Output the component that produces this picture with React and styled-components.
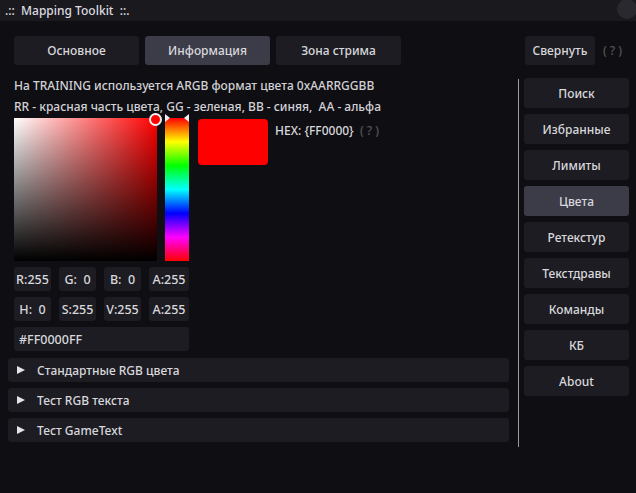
import React from "react";
import styled, { createGlobalStyle } from "styled-components";

const Global = createGlobalStyle`
  html, body { margin: 0; padding: 0; background: #0f0e13; }
  body { font-family: "Noto Sans", "Open Sans", sans-serif; font-size: 12px; font-weight: 500; color: #d4d4d8; }
  * { box-sizing: border-box; }
`;

const Window = styled.div`
  width: 636px;
  height: 493px;
  background: #0f0e13;
  overflow: hidden;
  display: flex;
  flex-direction: column;
`;

const TitleBar = styled.div`
  position: relative;
  height: 21px;
  background: #1a191e;
  display: flex;
  align-items: center;
  padding-left: 5px;
  color: #dcdce0;
  white-space: pre;
  flex-shrink: 0;
`;

const CloseDot = styled.div`
  position: absolute;
  right: -1px;
  top: -1px;
  width: 20px;
  height: 20px;
  border-radius: 50%;
  background: #2a2930;
`;

const Content = styled.div`
  display: grid;
  grid-template-columns: 501px 1fr;
  column-gap: 9px;
  padding-left: 8px;
  padding-top: 15px;
`;

const LeftCol = styled.div`
  display: flex;
  flex-direction: column;
`;

const TabsRow = styled.div`
  display: flex;
  gap: 6px;
  padding-left: 6px;
`;

const Btn = styled.div`
  display: flex;
  align-items: center;
  justify-content: center;
  width: ${(p) => p.$w || 125}px;
  height: ${(p) => p.$h || 29}px;
  border-radius: 3px;
  background: ${(p) => (p.$active ? "#3c3b48" : "#1d1c22")};
  color: #d8d8dc;
  white-space: nowrap;
`;

const InfoText = styled.div`
  padding-left: 6px;
  margin-top: 10px;
  line-height: 21px;
  white-space: pre;
  color: #d2d2d6;
`;

const PickerRow = styled.div`
  display: flex;
  padding-left: 6px;
  margin-top: 1px;
`;

const PickerCol = styled.div`
  display: flex;
  flex-direction: column;
  width: 175px;
`;

const PickerTop = styled.div`
  display: flex;
  gap: 8px;
`;

const SVBox = styled.div`
  position: relative;
  width: 143px;
  height: 143px;
  background: linear-gradient(to bottom, rgba(0,0,0,0), #000),
    linear-gradient(to right, #fff, #f00);
`;

const SVMarker = styled.div`
  position: absolute;
  right: -5px;
  top: -5px;
  width: 13px;
  height: 13px;
  border-radius: 50%;
  background: #f00;
  border: 2px solid #f0f0f0;
`;

const HueBar = styled.div`
  position: relative;
  width: 24px;
  height: 143px;
  background: linear-gradient(to bottom, #f00 0%, #ff0 16.6%, #0f0 33.3%, #0ff 50%, #00f 66.6%, #f0f 83.3%, #f00 100%);
`;

const Arrow = styled.div`
  position: absolute;
  top: -4px;
  width: 0;
  height: 0;
  border-top: 4px solid transparent;
  border-bottom: 4px solid transparent;
  ${(p) =>
    p.$side === "left"
      ? "left: 0; border-left: 5px solid #f4f4f4;"
      : "right: 0; border-right: 5px solid #f4f4f4;"}
`;

const FieldGrid = styled.div`
  display: grid;
  grid-template-columns: 37px 37px 37px 40px;
  column-gap: 8px;
  row-gap: 6px;
  margin-top: 6px;
`;

const Field = styled.div`
  height: 24px;
  border-radius: 3px;
  background: #1d1c22;
  display: flex;
  align-items: center;
  justify-content: ${(p) => (p.$left ? "flex-start" : "center")};
  padding-left: ${(p) => (p.$left ? "5px" : "0")};
  white-space: pre;
  color: #d8d8dc;
  font-size: 12.5px;
  grid-column: ${(p) => (p.$span ? "1 / -1" : "auto")};
`;

const Swatch = styled.div`
  width: 70px;
  height: 46px;
  margin-left: 9px;
  margin-top: 1px;
  border-radius: 4px;
  background: #ff0000;
`;

const HexLabel = styled.div`
  margin-left: 7px;
  margin-top: 4px;
  white-space: pre;
  color: #d8d8dc;
`;

const Hint = styled.span`
  color: #55545c;
  font-size: 12px;
  white-space: pre;
`;

const Headers = styled.div`
  display: flex;
  flex-direction: column;
  gap: 6px;
  margin-top: 7px;
`;

const Header = styled.div`
  height: 24px;
  border-radius: 3px;
  background: #1d1c22;
  display: flex;
  align-items: center;
  padding-left: 9px;
  color: #d8d8dc;
`;

const Tri = styled.div`
  width: 0;
  height: 0;
  border-top: 4.5px solid transparent;
  border-bottom: 4.5px solid transparent;
  border-left: 8px solid #e4e4e8;
  margin-right: 12px;
`;

const RightCol = styled.div`
  display: flex;
  flex-direction: column;
`;

const TopRight = styled.div`
  display: flex;
  align-items: center;
  gap: 8px;
  padding-left: 7px;
`;

const Sidebar = styled.div`
  margin-top: 14px;
  border-left: 1px solid #9a9aa0;
  padding-left: 5px;
  height: 368px;
  display: flex;
  flex-direction: column;
  gap: 6px;
`;

const SideBtn = styled(Btn)`
  width: 105px;
  height: 30px;
  margin-top: ${(p) => (p.$first ? "-1px" : "0")};
`;

const sideItems = ["Поиск", "Избранные", "Лимиты", "Цвета", "Ретекстур", "Текстдравы", "Команды", "КБ", "About"];

export default function App() {
  return (
    <Window>
      <Global />
      <TitleBar>
        {".::  Mapping Toolkit  ::."}
        <CloseDot />
      </TitleBar>
      <Content>
        <LeftCol>
          <TabsRow>
            <Btn>Основное</Btn>
            <Btn $active>Информация</Btn>
            <Btn>Зона стрима</Btn>
          </TabsRow>
          <InfoText>
            {"На TRAINING используется ARGB формат цвета 0xAARRGGBB\nRR - красная часть цвета, GG - зеленая, BB - синяя,  AA - альфа"}
          </InfoText>
          <PickerRow>
            <PickerCol>
              <PickerTop>
                <SVBox>
                  <SVMarker />
                </SVBox>
                <HueBar>
                  <Arrow $side="left" />
                  <Arrow $side="right" />
                </HueBar>
              </PickerTop>
              <FieldGrid>
                <Field>{"R:255"}</Field>
                <Field>{"G:  0"}</Field>
                <Field>{"B:  0"}</Field>
                <Field>{"A:255"}</Field>
                <Field>{"H:  0"}</Field>
                <Field>{"S:255"}</Field>
                <Field>{"V:255"}</Field>
                <Field>{"A:255"}</Field>
                <Field $left $span>#FF0000FF</Field>
              </FieldGrid>
            </PickerCol>
            <Swatch />
            <HexLabel>
              {"HEX: {FF0000}  "}
              <Hint>( ? )</Hint>
            </HexLabel>
          </PickerRow>
          <Headers>
            <Header><Tri />Стандартные RGB цвета</Header>
            <Header><Tri />Тест RGB текста</Header>
            <Header><Tri />Тест GameText</Header>
          </Headers>
        </LeftCol>
        <RightCol>
          <TopRight>
            <Btn $w={70}>Свернуть</Btn>
            <Hint>( ? )</Hint>
          </TopRight>
          <Sidebar>
            {sideItems.map((s, i) => (
              <SideBtn key={s} $active={s === "Цвета"} $first={i === 0}>
                {s}
              </SideBtn>
            ))}
          </Sidebar>
        </RightCol>
      </Content>
    </Window>
  );
}
